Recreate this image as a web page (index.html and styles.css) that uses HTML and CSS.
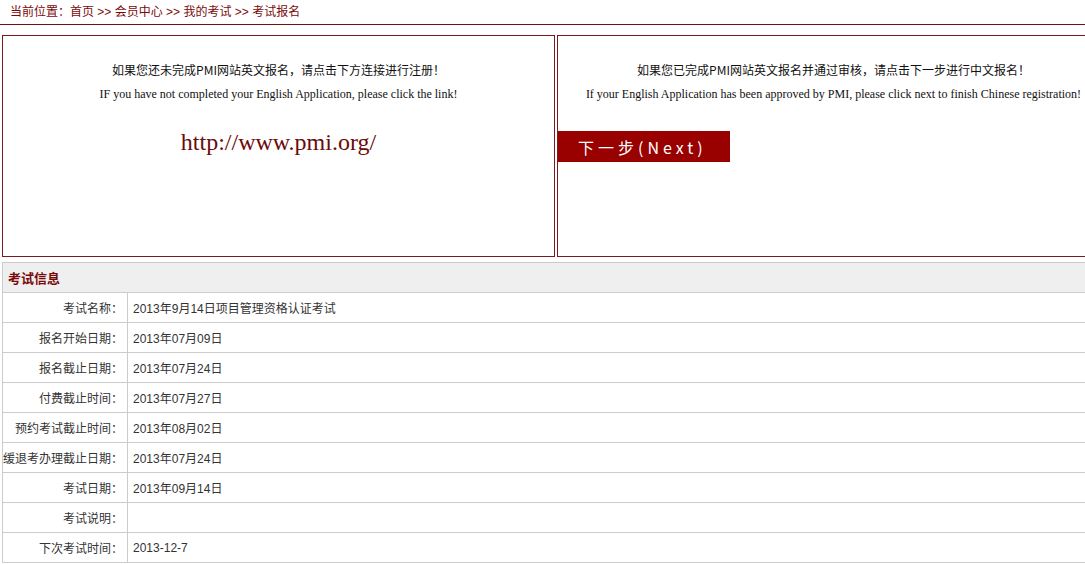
FILE: index.html
```html
<!DOCTYPE html>
<html lang="zh-CN">
<head>
  <meta charset="UTF-8" />
  <title>考试报名</title>
  <link rel="stylesheet" href="styles.css">
</head>
<body>
  <div class="crumb">
    当前位置：<a href="#">首页</a> &gt;&gt; <a href="#">会员中心</a> &gt;&gt; <a href="#">我的考试</a> &gt;&gt; <a href="#">考试报名</a>
  </div>

  <div class="apply">
    <div class="box">
      <p class="cn">如果您还未完成PMI网站英文报名，请点击下方连接进行注册！</p>
      <p class="en">IF you have not completed your English Application, please click the link!</p>
      <a class="pmi" href="#">http://www.pmi.org/</a>
    </div>
    <div class="box">
      <p class="cn">如果您已完成PMI网站英文报名并通过审核，请点击下一步进行中文报名！</p>
      <p class="en">If your English Application has been approved by PMI, please click next to finish Chinese registration!</p>
      <button class="next">下一步(Next)</button>
    </div>
  </div>

  <table class="info">
    <tr class="title">
      <td colspan="2">考试信息</td>
    </tr>
    <tr><td class="label">考试名称：</td><td>2013年9月14日项目管理资格认证考试</td></tr>
    <tr><td class="label">报名开始日期：</td><td>2013年07月09日</td></tr>
    <tr><td class="label">报名截止日期：</td><td>2013年07月24日</td></tr>
    <tr><td class="label">付费截止时间：</td><td>2013年07月27日</td></tr>
    <tr><td class="label">预约考试截止时间：</td><td>2013年08月02日</td></tr>
    <tr><td class="label">缓退考办理截止日期：</td><td>2013年07月24日</td></tr>
    <tr><td class="label">考试日期：</td><td>2013年09月14日</td></tr>
    <tr><td class="label">考试说明：</td><td></td></tr>
    <tr><td class="label">下次考试时间：</td><td>2013-12-7</td></tr>
  </table>
</body>
</html>
```

FILE: styles.css
```css
html {
  overflow: hidden;
}
body {
  margin: 0;
  width: 1112px;
  font-family: "Liberation Sans", "Noto Sans CJK SC", sans-serif;
  font-size: 12px;
  color: #333;
  background-color: #fff;
}
a {
  color: #7a0a0a;
  text-decoration: none;
}
.crumb {
  height: 24px;
  line-height: 24px;
  padding-left: 10px;
  color: #7a0a0a;
  border-bottom: 1px solid #6b1414;
}
.apply {
  display: flex;
  gap: 2px;
  margin-top: 10px;
  padding-left: 2px;
}
.box {
  width: 551px;
  height: 220px;
  border: 1px solid #7a1a1a;
  text-align: center;
  font-family: "Liberation Serif", "Noto Sans CJK SC", serif;
  color: #111;
}
.box .cn {
  margin: 26px 0 0;
  line-height: 16px;
  font-family: "Noto Sans CJK SC", sans-serif;
}
.box .en {
  margin: 8px 0 0;
  line-height: 16px;
}
.pmi {
  display: block;
  margin-top: 25px;
  font-size: 24px;
  line-height: 30px;
  color: #6b0a0a;
}
.next {
  display: block;
  margin-top: 29px;
  width: 172px;
  height: 31px;
  padding: 0 0 0 20px;
  text-align: left;
  background-color: #990000;
  color: #fff;
  border: none;
  font-family: "Noto Sans CJK SC", serif;
  font-size: 16px;
  letter-spacing: 4px;
  cursor: pointer;
}
.info {
  margin: 5px 0 0 2px;
  width: 1110px;
  border-collapse: collapse;
  border: 1px solid #ccc;
}
.info td {
  height: 29px;
  padding: 0 5px;
  border: 1px solid #ccc;
  white-space: nowrap;
}
.info .title td {
  background-color: #efefef;
  color: #7a0a0a;
  font-weight: bold;
  font-size: 13px;
}
.info .label {
  width: 119px;
  text-align: right;
  padding: 0 4px 0 0;
}
```
